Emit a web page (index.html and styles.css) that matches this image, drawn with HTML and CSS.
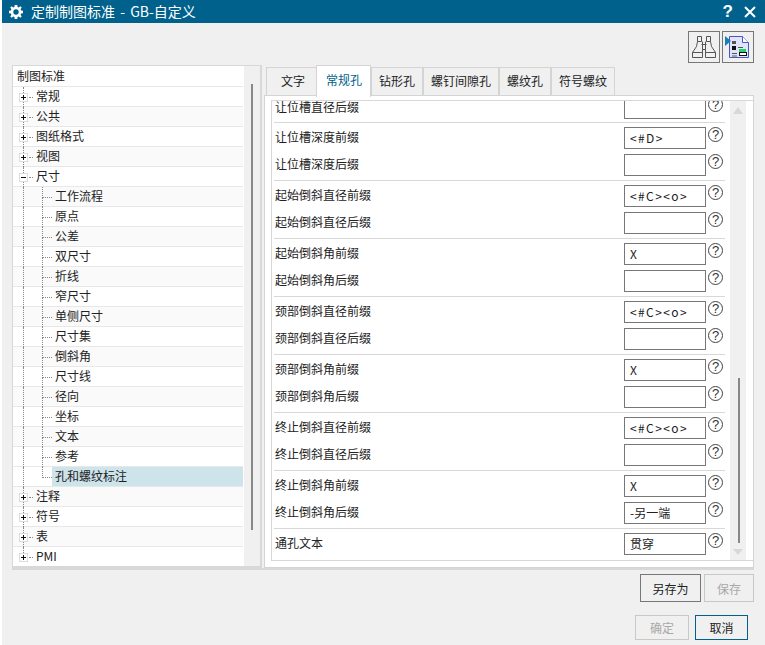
FILE: index.html
```html
<!DOCTYPE html>
<html lang="zh">
<head>
<meta charset="utf-8">
<title>定制制图标准</title>
<link rel="stylesheet" href="styles.css">
</head>
<body>
<div class="dialog">
  <header class="titlebar">
    <svg class="gear" width="14" height="14" viewBox="0 0 14 14"><path fill="#fff" fill-rule="evenodd" d="M5.700 0h2.600l.3 1.900 1.200.5L11.400 1.300l1.300 1.300-1.100 1.600.5 1.200 1.900.3v2.600l-1.900.3-.5 1.200 1.100 1.600-1.300 1.300-1.600-1.100-1.200.5-.3 1.900H5.700l-.3-1.900-1.200-.5-1.600 1.100-1.300-1.300 1.100-1.600-.5-1.200L0 8.300V5.700l1.900-.3.500-1.200-1.100-1.600 1.300-1.300 1.600 1.100 1.200-.5zM7 4.300a2.700 2.700 0 1 0 0 5.400 2.700 2.700 0 0 0 0-5.400z"/></svg>
    <span class="title-text">定制制图标准 - GB-自定义</span>
    <span class="title-help">?</span>
    <svg class="title-close" width="12" height="12" viewBox="0 0 12 12"><path d="M1 1l10 10M11 1L1 11" stroke="#fff" stroke-width="2" fill="none"/></svg>
  </header>

  <div class="toolbar">
    <button class="icon-btn" type="button" aria-label="查找">
      <svg width="26" height="26" viewBox="0 0 26 26" fill="none" stroke="#555" stroke-width="1"><path d="M6.500 2.500h4v5h-4zM15.500 2.500h4v5h-4zM6.500 7.500l-1 5-4 6v5h10v-16M19.500 7.500l1 5 4 6v5h-10v-16M10.500 10.500h5M11 15.500h4M1.500 18.500h10M14.500 18.500h10"/></svg>
    </button>
    <button class="icon-btn" type="button" aria-label="报告">
      <svg width="28" height="28" viewBox="0 0 28 28"><path d="M5.500 3.500h13l6 6v15h-19z" fill="#dfe4fb" stroke="#4a55c8"/><path d="M18.500 3.500v6h6" fill="#fff" stroke="#4a55c8"/><path d="M1 3l6 5-6 5z" fill="#1a7fb5"/><rect x="8" y="8" width="4" height="3" fill="#555"/><rect x="8" y="13" width="4" height="4" fill="#111"/><path d="M14 14.500h5M8 20.500h5M8 23h5" stroke="#555"/><rect x="15" y="16" width="7" height="3" fill="#22d36a"/><rect x="15.500" y="19.500" width="7" height="3" fill="#fff" stroke="#111"/></svg>
    </button>
  </div>

  <main class="content">
    <nav class="tree-frame">
      <div class="tree">
        <div class="tree-root">制图标准</div>
        <div class="node top"><i class="box plus"></i><span>常规</span></div>
        <div class="node top alt"><i class="box plus"></i><span>公共</span></div>
        <div class="node top"><i class="box plus"></i><span>图纸格式</span></div>
        <div class="node top alt"><i class="box plus"></i><span>视图</span></div>
        <div class="node top"><i class="box minus"></i><span>尺寸</span></div>
        <div class="node sub alt"><span>工作流程</span></div>
        <div class="node sub"><span>原点</span></div>
        <div class="node sub alt"><span>公差</span></div>
        <div class="node sub"><span>双尺寸</span></div>
        <div class="node sub alt"><span>折线</span></div>
        <div class="node sub"><span>窄尺寸</span></div>
        <div class="node sub alt"><span>单侧尺寸</span></div>
        <div class="node sub"><span>尺寸集</span></div>
        <div class="node sub alt"><span>倒斜角</span></div>
        <div class="node sub"><span>尺寸线</span></div>
        <div class="node sub alt"><span>径向</span></div>
        <div class="node sub"><span>坐标</span></div>
        <div class="node sub alt"><span>文本</span></div>
        <div class="node sub"><span>参考</span></div>
        <div class="node sub last"><span class="selected">孔和螺纹标注</span></div>
        <div class="node top alt"><i class="box plus"></i><span>注释</span></div>
        <div class="node top"><i class="box plus"></i><span>符号</span></div>
        <div class="node top alt"><i class="box plus"></i><span>表</span></div>
        <div class="node top end"><i class="box plus"></i><span>PMI</span></div>
      </div>
      <div class="tree-scroll"><div class="tree-thumb"></div></div>
    </nav>

    <section class="tab-area">
      <div class="tabs">
        <div class="tab first">文字</div>
        <div class="tab active">常规孔</div>
        <div class="tab">钻形孔</div>
        <div class="tab">螺钉间隙孔</div>
        <div class="tab">螺纹孔</div>
        <div class="tab">符号螺纹</div>
      </div>
      <div class="tab-panel">
        <div class="form-box">
          <div class="form">
            <div class="group clipped">
              <div class="row"><label>让位槽直径后缀</label><div class="field"></div><span class="help">?</span></div>
            </div>
            <div class="group">
              <div class="row"><label>让位槽深度前缀</label><div class="field wide">&lt;#D&gt;</div><span class="help">?</span></div>
              <div class="row"><label>让位槽深度后缀</label><div class="field"></div><span class="help">?</span></div>
            </div>
            <div class="group">
              <div class="row"><label>起始倒斜直径前缀</label><div class="field wide">&lt;#C&gt;&lt;o&gt;</div><span class="help">?</span></div>
              <div class="row"><label>起始倒斜直径后缀</label><div class="field"></div><span class="help">?</span></div>
            </div>
            <div class="group">
              <div class="row"><label>起始倒斜角前缀</label><div class="field">X</div><span class="help">?</span></div>
              <div class="row"><label>起始倒斜角后缀</label><div class="field"></div><span class="help">?</span></div>
            </div>
            <div class="group">
              <div class="row"><label>颈部倒斜直径前缀</label><div class="field wide">&lt;#C&gt;&lt;o&gt;</div><span class="help">?</span></div>
              <div class="row"><label>颈部倒斜直径后缀</label><div class="field"></div><span class="help">?</span></div>
            </div>
            <div class="group">
              <div class="row"><label>颈部倒斜角前缀</label><div class="field">X</div><span class="help">?</span></div>
              <div class="row"><label>颈部倒斜角后缀</label><div class="field"></div><span class="help">?</span></div>
            </div>
            <div class="group">
              <div class="row"><label>终止倒斜直径前缀</label><div class="field wide">&lt;#C&gt;&lt;o&gt;</div><span class="help">?</span></div>
              <div class="row"><label>终止倒斜直径后缀</label><div class="field"></div><span class="help">?</span></div>
            </div>
            <div class="group">
              <div class="row"><label>终止倒斜角前缀</label><div class="field">X</div><span class="help">?</span></div>
              <div class="row"><label>终止倒斜角后缀</label><div class="field">-另一端</div><span class="help">?</span></div>
            </div>
            <div class="group single">
              <div class="row"><label>通孔文本</label><div class="field">贯穿</div><span class="help">?</span></div>
            </div>
          </div>
          <div class="form-scroll">
            <span class="arrow up"></span>
            <div class="form-thumb"></div>
            <span class="arrow down"></span>
          </div>
        </div>
      </div>
    </section>
  </main>

  <div class="divider"></div>
  <div class="actions save-row">
    <button class="btn strong save-as" type="button">另存为</button>
    <button class="btn off save" type="button">保存</button>
  </div>
  <div class="actions ok-row">
    <button class="btn off ok" type="button">确定</button>
    <button class="btn cancel" type="button">取消</button>
  </div>
</div>
</body>
</html>
```

FILE: styles.css
```css
* { box-sizing: border-box; }
html, body { margin: 0; height: 100%; }
body {
  width: 765px;
  height: 645px;
  overflow: hidden;
  background: #fff;
  font-family: "Noto Sans CJK SC", "Noto Sans", sans-serif;
  font-size: 12px;
  color: #222;
  padding-left: 2px;
}
.dialog { height: 645px; background: #f0f0f0; display: flex; flex-direction: column; }

.titlebar {
  height: 23px;
  flex: none;
  background: #00628c;
  color: #fff;
  display: flex;
  align-items: center;
  padding-left: 7px;
  padding-right: 9px;
}
.gear { flex: none; }
.title-text { margin-left: 8px; font-size: 14px; line-height: 23px; flex: 1; word-spacing: 2px; }
.title-help { font: bold 17px/23px "Liberation Sans", sans-serif; margin-right: 11px; }
.title-close { flex: none; }

.toolbar {
  height: 42px;
  flex: none;
  display: flex;
  justify-content: flex-end;
  gap: 2px;
  padding: 8px 11px 0 0;
}
.icon-btn {
  width: 32px;
  height: 32px;
  padding: 0;
  background: #f0f0f0;
  border: 1px solid #777;
  display: flex;
  align-items: center;
  justify-content: center;
}

.content { height: 503px; flex: none; display: flex; padding-left: 10px; }
.tree-frame {
  width: 250px;
  height: 503px;
  flex: none;
  background: #fff;
  border: 1px solid #d8d8d8;
  border-width: 1px 2px 2px 1px;
  display: flex;
}
.tree { width: 230px; margin-right: 1px; padding-top: 1px; flex: none; }
.tree-root { height: 20px; line-height: 18px; padding-left: 4px; border-bottom: 1px solid #e8e8e8; }
.node {
  position: relative;
  height: 20px;
  line-height: 18px;
  border-bottom: 1px solid #e8e8e8;
  display: flex;
  align-items: stretch;
  color: #222;
}
.node.alt { background: #fafafa; }
.node.end { border-bottom: 0; }
.node.top { padding-left: 23px; }
.node.top > span { white-space: nowrap; }
.node.sub { padding-left: 39px; }
.node::before {
  content: "";
  position: absolute;
  left: 10px;
  top: 0;
  bottom: -1px;
  border-left: 1px dotted #888;
}
.node.end::before { bottom: 10px; }
.node.sub::after {
  content: "";
  position: absolute;
  left: 29px;
  top: 0;
  width: 9px;
  height: 10px;
  border-left: 1px dotted #888;
  border-bottom: 1px dotted #888;
}
.node.sub > span { padding: 0 3px; flex: 1; }
.node.sub.last > .selected { background: #cde4ea; }
.node.sub:not(.last) > span::before {
  content: "";
  position: absolute;
  left: 29px;
  top: 10px;
  bottom: -1px;
  border-left: 1px dotted #888;
}
.box {
  position: absolute;
  left: 6px;
  top: 6px;
  width: 9px;
  height: 9px;
  background: #fff;
  border: 1px solid #ddd;
  z-index: 1;
}
.box::before {
  content: "";
  position: absolute;
  left: 1px;
  top: 3px;
  width: 5px;
  height: 1px;
  background: #111;
}
.box.plus::after {
  content: "";
  position: absolute;
  left: 3px;
  top: 1px;
  width: 1px;
  height: 5px;
  background: #111;
}
.node.top > span { position: relative; }
.node.top > span::before {
  content: "";
  position: absolute;
  left: -7px;
  top: 10px;
  width: 4px;
  border-top: 1px dotted #888;
}
.tree-scroll { width: 16px; flex: none; background: #f0f0f0; padding: 18px 0 0 7px; }
.tree-thumb { width: 2px; height: 446px; background: #888; }

.tab-area { width: 490px; margin-left: 2px; display: flex; flex-direction: column; position: relative; }
.tabs { height: 30px; flex: none; display: flex; align-items: flex-end; padding-left: 2px; }
.tab {
  height: 28px;
  line-height: 26px;
  padding: 0 7px;
  background: #f0f0f0;
  border: 1px solid #d4d4d4;
  border-bottom: 0;
  text-align: center;
}
.tab.first { width: 50px; border-right: 0; padding: 0 0 0 3px; }
.tab.active {
  height: 32px;
  width: 55px;
  padding: 0 0 0 1px;
  margin-bottom: -2px;
  background: #fff;
  color: #00628c;
  line-height: 28px;
  position: relative;
  z-index: 1;
}
.tab-panel {
  height: 473px;
  background: #fff;
  border: 1px solid #d4d4d4;
  padding: 4px 0 6px 6px;
}
.form-box {
  height: 461px;
  width: 482px;
  border: 1px solid #d8d8d8;
  border-width: 1px 0 1px 1px;
  display: flex;
}
.form { width: 458px; flex: none; overflow: hidden; background: #fff; }
.group { height: 58px; margin: 0 5px 0 2px; padding: 4px 0; border-bottom: 1px solid #d8d8d8; display: flex; flex-direction: column; gap: 5px; }
.group.clipped { height: 22px; padding: 0 0 3px; overflow: hidden; justify-content: flex-end; }
.group.single { border-bottom: 0; height: 30px; }
.row { display: flex; height: 22px; flex: none; }
.row label { width: 350px; line-height: 20px; padding-left: 1px; flex: none; }
.field {
  width: 82px;
  height: 22px;
  flex: none;
  border: 1px solid #777;
  background: #fff;
  line-height: 20px;
  padding-left: 5px;
  color: #222;
}
.field.wide { letter-spacing: 1.4px; }
.help {
  width: 15px;
  height: 15px;
  margin-left: 2px;
  border: 1px solid #444;
  border-radius: 50%;
  font: 13px/13px "Liberation Sans", sans-serif;
  text-align: center;
  color: #333;
  flex: none;
}
.form-scroll {
  width: 16px;
  flex: none;
  background: #f0f0f0;
  display: flex;
  flex-direction: column;
  align-items: center;
}
.arrow { width: 0; height: 0; border-left: 5px solid transparent; border-right: 5px solid transparent; flex: none; }
.arrow.up { border-bottom: 7px solid #d8d8d8; margin-top: 6px; }
.arrow.down { border-top: 6px solid #d8d8d8; margin-top: 6px; margin-bottom: 5px; }
.form-thumb { width: 2px; height: 165px; background: #888; margin-top: auto; margin-left: 1px; }

.divider { height: 2px; margin: 0 11px 0 10px; background: #d8d8d8; flex: none; }
.actions { display: flex; flex: none; }
.save-row { padding: 4px 0 0 638px; height: 45px; gap: 3px; }
.ok-row { padding: 0 0 0 633px; gap: 6px; }
.btn {
  font-family: "Noto Sans CJK SC", sans-serif;
  font-size: 12px;
  background: #f0f0f0;
  padding: 0;
  color: #222;
}
.btn.strong { border: 1px solid #777; }
.btn.off { border: 1px solid #c8c8c8; color: #a8a8a8; }
.save-as { width: 61px; height: 28px; }
.save { width: 50px; height: 28px; }
.ok { width: 54px; height: 25px; }
.cancel { width: 53px; height: 25px; border: 1px solid #00628c; }
```
